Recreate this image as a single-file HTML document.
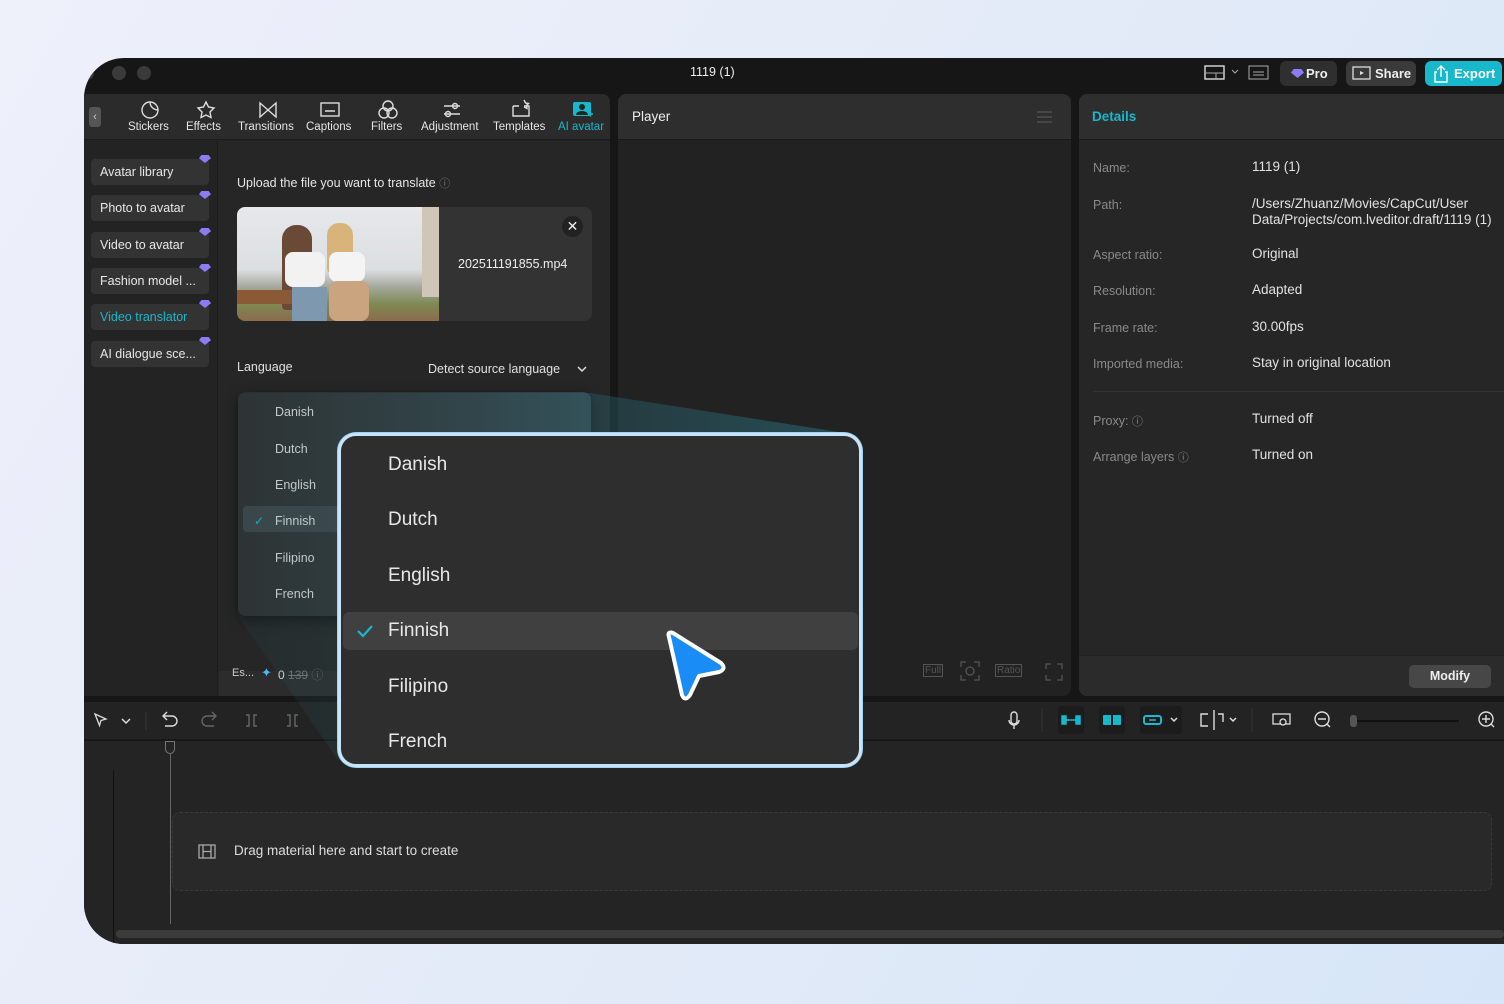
<!DOCTYPE html>
<html><head><meta charset="utf-8">
<style>
*{box-sizing:border-box;margin:0;padding:0}
body{width:1504px;height:1004px;overflow:hidden;background:linear-gradient(120deg,#eef0fa 0%,#e4ebf8 50%,#d6e6f8 100%);font-family:"Liberation Sans",sans-serif;position:relative;color:#ddd}
.abs{position:absolute}
.win{left:84px;top:58px;width:1420px;height:886px;background:#161616;border-radius:40px 0 0 40px;overflow:hidden}
.t{position:absolute;white-space:nowrap}
.panel{position:absolute;background:#262626;border-radius:8px;overflow:hidden}
.tab{position:absolute;top:0;text-align:center;font-size:11.5px;color:#e6e6e6}
.side{position:absolute;left:7px;width:118px;height:26px;background:#333;border-radius:4px;font-size:12.5px;color:#e8e8e8;padding:6px 0 0 9px}
.gem{position:absolute;right:-2px;top:-4px;width:12px;height:8px;background:#8b7cf6;clip-path:polygon(20% 0,80% 0,100% 40%,50% 100%,0 40%)}
.lbl{position:absolute;left:14px;font-size:12.5px;color:#8a8a8a}
.val{position:absolute;left:173px;font-size:13.5px;color:#e2e2e2}
.ic{stroke:#ddd;fill:none;stroke-width:1.4}
</style></head><body>
<div class="abs win">
  <div class="abs" style="left:-4px;top:8px;width:14px;height:14px;border-radius:7px;background:#3a3a3a"></div>
  <div class="abs" style="left:28px;top:8px;width:14px;height:14px;border-radius:7px;background:#3a3a3a"></div>
  <div class="abs" style="left:53px;top:8px;width:14px;height:14px;border-radius:7px;background:#3a3a3a"></div>
  <div class="t" style="left:606px;top:7px;font-size:12.5px;color:#eee">1119 (1)</div>
  <svg class="abs" style="left:1120px;top:6px" width="70" height="18"><rect x="1" y="2" width="19" height="13" class="ic" stroke="#aaa"/><line x1="1" y1="9" x2="20" y2="9" stroke="#aaa"/><line x1="12" y1="9" x2="12" y2="15" stroke="#aaa"/><path d="M28 6l3 3 3-3" stroke="#aaa" fill="none"/><rect x="45" y="2" width="19" height="13" fill="none" stroke="#aaa"/><line x1="49" y1="8" x2="60" y2="8" stroke="#aaa"/><line x1="49" y1="11" x2="60" y2="11" stroke="#aaa"/></svg>
  <div class="abs" style="left:1196px;top:3px;width:57px;height:25px;background:#2f2f2f;border-radius:6px"><div class="abs" style="left:11px;top:8px;width:13px;height:9px;background:#8b7cf6;clip-path:polygon(20% 0,80% 0,100% 40%,50% 100%,0 40%)"></div><div class="t" style="left:26px;top:5px;font-size:13px;font-weight:bold;color:#eee">Pro</div></div>
  <div class="abs" style="left:1262px;top:3px;width:70px;height:25px;background:#3a3a3a;border-radius:6px"><svg class="abs" style="left:6px;top:5px" width="20" height="16"><rect x="1" y="1" width="17" height="12" fill="none" stroke="#ddd" stroke-width="1.3"/><path d="M8 5l4 2-4 2z" fill="#ddd"/></svg><div class="t" style="left:29px;top:5px;font-size:13px;font-weight:bold;color:#eee">Share</div></div>
  <div class="abs" style="left:1341px;top:3px;width:77px;height:25px;background:#17b8cc;border-radius:6px"><svg class="abs" style="left:7px;top:4px" width="18" height="18"><path d="M5 7H3v10h12V7h-2M9 12V2M5 5l4-4 4 4" fill="none" stroke="#fff" stroke-width="1.4"/></svg><div class="t" style="left:29px;top:5px;font-size:13px;font-weight:bold;color:#fff">Export</div></div>

  <div class="panel" style="left:0;top:36px;width:526px;height:602px;background:#232323;border-radius:0 8px 8px 0">
    <div class="abs" style="left:0;top:0;width:526px;height:46px;background:#2b2b2b;border-bottom:1px solid #1c1c1c"></div>
    <div class="abs" style="left:5px;top:13px;width:12px;height:20px;background:#555;border-radius:3px;color:#ccc;font-size:11px;text-align:center;line-height:20px">‹</div>
    <svg class="abs" style="left:0;top:0" width="526" height="30">
      <circle cx="66" cy="16" r="8" class="ic"/><path d="M66 8a8 8 0 0 0 8 8" class="ic"/>
      <path d="M122 8l2.5 5 5.5 1-4 4 1 5.5-5-2.5-5 2.5 1-5.5-4-4 5.5-1z" class="ic"/>
      <path d="M176 9v14l8-7 8 7V9l-8 7z" class="ic"/>
      <rect x="237" y="9" width="18" height="13" class="ic"/><line x1="241" y1="17" x2="251" y2="17" class="ic"/>
      <circle cx="304" cy="12" r="5" class="ic"/><circle cx="300" cy="19" r="5" class="ic"/><circle cx="308" cy="19" r="5" class="ic"/>
      <path d="M360 12h16M360 20h16" class="ic"/><circle cx="371" cy="12" r="2.5" fill="#2b2b2b" class="ic"/><circle cx="364" cy="20" r="2.5" fill="#2b2b2b" class="ic"/>
      <path d="M429 12v10h16V12h-5M429 12h6" class="ic"/><path d="M440 6l1.5 3 3 .5-2 2 .5 3-3-1.5" class="ic"/>
      <rect x="489" y="8" width="18" height="14" rx="2" fill="#17b8cc"/><circle cx="498" cy="13" r="3" fill="#232323"/><path d="M492 21a6 4 0 0 1 12 0" fill="#232323"/><path d="M504 20h5M506.5 17.5v5" stroke="#17b8cc" stroke-width="1.6"/>
    </svg>
    <div class="tab" style="left:44px;top:27px">Stickers</div>
    <div class="tab" style="left:102px;top:27px">Effects</div>
    <div class="tab" style="left:154px;top:27px">Transitions</div>
    <div class="tab" style="left:222px;top:27px">Captions</div>
    <div class="tab" style="left:287px;top:27px">Filters</div>
    <div class="tab" style="left:337px;top:27px">Adjustment</div>
    <div class="tab" style="left:409px;top:27px">Templates</div>
    <div class="tab" style="left:474px;top:27px;color:#17b8cc">AI avatar</div>
    <div class="abs" style="left:133px;top:47px;width:1px;height:555px;background:#1c1c1c"></div>
    <div class="abs" style="left:134px;top:47px;width:392px;height:555px;background:#262626"></div>

    <div class="side" style="top:65px">Avatar library<div class="gem"></div></div>
    <div class="side" style="top:101px">Photo to avatar<div class="gem"></div></div>
    <div class="side" style="top:138px">Video to avatar<div class="gem"></div></div>
    <div class="side" style="top:174px">Fashion model ...<div class="gem"></div></div>
    <div class="side" style="top:210px;color:#17b8cc">Video translator<div class="gem"></div></div>
    <div class="side" style="top:247px">AI dialogue sce...<div class="gem"></div></div>

    <div class="t" style="left:153px;top:81px;font-size:12.5px;color:#e6e6e6">Upload the file you want to translate <span style="color:#777;font-size:11px">ⓘ</span></div>
    <div class="abs" style="left:153px;top:113px;width:355px;height:114px;background:#333;border-radius:8px"></div>
    <div class="abs" style="left:153px;top:113px;width:202px;height:114px;border-radius:8px 0 0 8px;overflow:hidden;background:linear-gradient(180deg,#e6e8ea 0%,#dcdfe2 55%,#a4a89c 70%,#7e8a54 85%,#8b6b4a 100%)">
      <div class="abs" style="left:185px;top:0;width:17px;height:90px;background:#cfc6b8"></div>
      <div class="abs" style="left:45px;top:18px;width:30px;height:85px;background:#6a4a36;border-radius:14px 14px 4px 4px"></div>
      <div class="abs" style="left:48px;top:45px;width:40px;height:35px;background:#f2f2f2;border-radius:8px"></div>
      <div class="abs" style="left:90px;top:16px;width:26px;height:50px;background:#d8b47a;border-radius:12px 12px 4px 4px"></div>
      <div class="abs" style="left:92px;top:45px;width:36px;height:30px;background:#f4f4f4;border-radius:8px"></div>
      <div class="abs" style="left:92px;top:74px;width:40px;height:40px;background:#c9a47e;border-radius:8px"></div>
      <div class="abs" style="left:0;top:83px;width:90px;height:14px;background:#8a5a36"></div>
      <div class="abs" style="left:55px;top:80px;width:35px;height:34px;background:#7e98b0"></div>
    </div>
    <div class="t" style="left:374px;top:163px;font-size:12.5px;color:#eee">202511191855.mp4</div>
    <div class="abs" style="left:478px;top:122px;width:21px;height:21px;border-radius:11px;background:#222;color:#eee;font-size:14px;text-align:center;line-height:21px">✕</div>

    <div class="t" style="left:153px;top:266px;font-size:12.5px;color:#e0e0e0">Language</div>
    <div class="t" style="left:344px;top:268px;font-size:12.5px;color:#e0e0e0">Detect source language</div>
    <svg class="abs" style="left:492px;top:270px" width="12" height="10"><path d="M2 3l4 4 4-4" fill="none" stroke="#ddd" stroke-width="1.5"/></svg>
    <div class="abs" style="left:135px;top:577px;width:391px;height:25px;background:#2c2c2c"></div>
  </div>
  <div class="t" style="left:148px;top:609px;font-size:11px;color:#ccc">Es...</div>
  <div class="t" style="left:177px;top:607px;font-size:13px;color:#4cb8f0">✦</div>
  <div class="t" style="left:194px;top:608px;font-size:12px;color:#ddd">0 <span style="color:#777;text-decoration:line-through">139</span> <span style="color:#666">ⓘ</span></div>

  <div class="abs" style="left:154px;top:334px;width:353px;height:224px;background:linear-gradient(90deg,#2e2e2e 0%,#33393c 60%,#37454a 100%);border-radius:8px;box-shadow:0 4px 12px rgba(0,0,0,.5)">
    <div class="abs" style="left:5px;top:114px;width:120px;height:26px;background:#3d4447;border-radius:4px"></div>
    <div class="t" style="left:37px;top:13px;font-size:12.5px;color:#ddd">Danish</div>
    <div class="t" style="left:37px;top:50px;font-size:12.5px;color:#ddd">Dutch</div>
    <div class="t" style="left:37px;top:86px;font-size:12.5px;color:#ddd">English</div>
    <div class="t" style="left:16px;top:122px;font-size:12px;color:#17b8cc">✓</div>
    <div class="t" style="left:37px;top:122px;font-size:12.5px;color:#ddd">Finnish</div>
    <div class="t" style="left:37px;top:159px;font-size:12.5px;color:#ddd">Filipino</div>
    <div class="t" style="left:37px;top:195px;font-size:12.5px;color:#ddd">French</div>
  </div>

  <div class="panel" style="left:534px;top:36px;width:453px;height:602px;background:#222">
    <div class="abs" style="left:0;top:0;width:453px;height:46px;background:#2e2e2e;border-bottom:1px solid #1a1a1a"></div>
    <div class="t" style="left:14px;top:15px;font-size:13.5px;color:#eee">Player</div>
    <svg class="abs" style="left:419px;top:16px" width="16" height="14"><path d="M0 2h15M0 7h15M0 12h15" stroke="#555" stroke-width="1.3"/></svg>
    <div class="t" style="left:305px;top:570px;font-size:10px;color:#555;border:1px solid #555;padding:0 1px">Full</div>
    <svg class="abs" style="left:342px;top:567px" width="20" height="20"><path d="M1 6V1h5M14 1h5v5M19 14v5h-5M6 19H1v-5" fill="none" stroke="#555" stroke-width="1.3"/><circle cx="10" cy="10" r="4" fill="none" stroke="#555" stroke-width="1.3"/></svg>
    <div class="t" style="left:377px;top:570px;font-size:10px;color:#555;border:1px solid #555;padding:0 1px">Ratio</div>
    <svg class="abs" style="left:427px;top:569px" width="18" height="18"><path d="M1 6V1h5M12 1h5v5M17 12v5h-5M6 17H1v-5" fill="none" stroke="#555" stroke-width="1.3"/></svg>
  </div>

  <div class="panel" style="left:995px;top:36px;width:425px;height:602px;background:#262626;border-radius:8px 0 0 8px">
    <div class="abs" style="left:0;top:0;width:425px;height:46px;background:#2e2e2e;border-bottom:1px solid #1a1a1a"></div>
    <div class="t" style="left:13px;top:15px;font-size:13.5px;font-weight:bold;color:#17b8cc">Details</div>
    <div class="lbl" style="top:67px">Name:</div><div class="val" style="top:65px">1119 (1)</div>
    <div class="lbl" style="top:104px">Path:</div><div class="val" style="top:102px;line-height:16px">/Users/Zhuanz/Movies/CapCut/User<br>Data/Projects/com.lveditor.draft/1119 (1)</div>
    <div class="lbl" style="top:154px">Aspect ratio:</div><div class="val" style="top:152px">Original</div>
    <div class="lbl" style="top:190px">Resolution:</div><div class="val" style="top:188px">Adapted</div>
    <div class="lbl" style="top:227px">Frame rate:</div><div class="val" style="top:225px">30.00fps</div>
    <div class="lbl" style="top:263px">Imported media:</div><div class="val" style="top:261px">Stay in original location</div>
    <div class="abs" style="left:14px;top:297px;width:411px;height:1px;background:#333"></div>
    <div class="lbl" style="top:319px">Proxy: <span style="font-size:11px">ⓘ</span></div><div class="val" style="top:317px">Turned off</div>
    <div class="lbl" style="top:355px">Arrange layers <span style="font-size:11px">ⓘ</span></div><div class="val" style="top:353px">Turned on</div>
    <div class="abs" style="left:0;top:561px;width:425px;height:41px;background:#2b2b2b;border-top:1px solid #222"></div>
    <div class="abs" style="left:330px;top:571px;width:82px;height:23px;background:#474747;border-radius:5px;font-size:12.5px;font-weight:bold;color:#eee;text-align:center;line-height:23px">Modify</div>
  </div>

  <div class="abs" style="left:0;top:644px;width:1420px;height:38px;background:#232323;border-bottom:1px solid #1a1a1a"></div>
  <svg class="abs" style="left:0;top:644px" width="1420" height="38">
    <path d="M11 12l11 5-5 1.5-1.5 5z" fill="none" stroke="#ddd" stroke-width="1.3"/><path d="M38 17l4 4 4-4" fill="none" stroke="#ddd" stroke-width="1.5"/>
    <line x1="62" y1="10" x2="62" y2="28" stroke="#3a3a3a"/>
    <path d="M80 14h8a5 5 0 0 1 0 10h-7M83 10l-4 4 4 4" fill="none" stroke="#ddd" stroke-width="1.4"/>
    <path d="M131 14h-8a5 5 0 0 0 0 10h7M128 10l4 4-4 4" fill="none" stroke="#666" stroke-width="1.4"/>
    <path d="M162 13h3v11h-3M173 13h-3v11h3" fill="none" stroke="#666" stroke-width="1.4"/>
    <path d="M203 13h3v11h-3M214 13h-3v11h3" fill="none" stroke="#666" stroke-width="1.4"/>
    <rect x="927" y="10" width="6" height="12" rx="3" fill="none" stroke="#ddd" stroke-width="1.4"/><path d="M925 18a5 5 0 0 0 10 0M930 23v4" fill="none" stroke="#ddd" stroke-width="1.4"/>
    <line x1="958" y1="6" x2="958" y2="30" stroke="#333"/>
    <rect x="974" y="4" width="26" height="28" rx="3" fill="#1c1c1c"/><path d="M978 14h4v8h-4zM992 14h4v8h-4zM982 18h10" fill="#17b8cc" stroke="#17b8cc" stroke-width="1.5"/>
    <rect x="1015" y="4" width="26" height="28" rx="3" fill="#1c1c1c"/><rect x="1019" y="13" width="18" height="10" rx="1" fill="#17b8cc"/><line x1="1028" y1="9" x2="1028" y2="27" stroke="#1c1c1c" stroke-width="2"/>
    <rect x="1056" y="4" width="42" height="28" rx="3" fill="#1c1c1c"/><rect x="1060" y="14" width="17" height="8" rx="2" fill="none" stroke="#17b8cc" stroke-width="2"/><line x1="1065" y1="18" x2="1072" y2="18" stroke="#17b8cc" stroke-width="1.5"/><path d="M1087 16l3 3 3-3" fill="none" stroke="#ddd" stroke-width="1.5"/>
    <path d="M1124 12h-7v12h7M1130 8v20M1134 12h5v8" fill="none" stroke="#ddd" stroke-width="1.4"/><path d="M1146 16l3 3 3-3" fill="none" stroke="#ddd" stroke-width="1.5"/>
    <line x1="1168" y1="6" x2="1168" y2="30" stroke="#333"/>
    <rect x="1189" y="12" width="17" height="10" fill="none" stroke="#ddd" stroke-width="1.3"/><circle cx="1199" cy="20" r="3" fill="#232323" stroke="#ddd" stroke-width="1.3"/>
    <circle cx="1238" cy="17" r="7" fill="none" stroke="#ddd" stroke-width="1.4"/><path d="M1234 17h8M1243 22l3 3" stroke="#ddd" stroke-width="1.4"/>
    <rect x="1266" y="13" width="7" height="12" rx="3" fill="#555"/><line x1="1273" y1="19" x2="1375" y2="19" stroke="#111" stroke-width="2"/>
    <circle cx="1402" cy="17" r="7" fill="none" stroke="#ddd" stroke-width="1.4"/><path d="M1398 17h8M1402 13v8M1407 22l3 3" stroke="#ddd" stroke-width="1.4"/>
  </svg>

  <div class="abs" style="left:0;top:683px;width:1420px;height:203px;background:#242424"></div>
  <div class="abs" style="left:29px;top:712px;width:1px;height:174px;background:#111"></div>
  <div class="abs" style="left:81px;top:683px;width:10px;height:13px;border:1.5px solid #777;border-radius:0 0 5px 5px"></div>
  <div class="abs" style="left:86px;top:696px;width:1px;height:170px;background:#666"></div>
  <div class="abs" style="left:88px;top:754px;width:1320px;height:79px;border:1px dashed #3a3a3a;border-radius:8px;background:#292929"></div>
  <svg class="abs" style="left:114px;top:786px" width="18" height="15"><rect x="1" y="1" width="16" height="13" fill="none" stroke="#aaa" stroke-width="1.3"/><path d="M5 1v13M13 1v13M5 7.5h8" stroke="#aaa" stroke-width="1.3"/></svg>
  <div class="t" style="left:150px;top:785px;font-size:13.5px;color:#ddd">Drag material here and start to create</div>
  <div class="abs" style="left:32px;top:872px;width:1388px;height:8px;background:#3c3c3c;border-radius:4px"></div>
</div>

<svg class="abs" style="left:0;top:0" width="1504" height="1004">
  <defs><linearGradient id="g" x1="0" y1="0" x2="1" y2="0"><stop offset="0" stop-color="#2a5a62" stop-opacity=".12"/><stop offset=".6" stop-color="#2a6a76" stop-opacity=".35"/><stop offset="1" stop-color="#2a7080" stop-opacity=".55"/></linearGradient></defs>
  <polygon points="590,393 845,433 845,760 338,760 238,616 238,393" fill="url(#g)"/>
</svg>

<div class="abs" style="left:338px;top:433px;width:524px;height:334px;border-radius:18px;border:3px solid #c8e4f8;background:#2e2e2e;box-shadow:0 0 0 1px #9fd4f4">
  <div class="abs" style="left:2px;top:176px;width:515px;height:38px;background:#404040;border-radius:6px"></div>
  <div class="t" style="left:47px;top:18px;font-size:19px;color:#e8e8e8">Danish</div>
  <div class="t" style="left:47px;top:73px;font-size:19px;color:#e8e8e8">Dutch</div>
  <div class="t" style="left:47px;top:129px;font-size:19px;color:#e8e8e8">English</div>
  <svg class="abs" style="left:15px;top:187px" width="18" height="16"><path d="M2 8l5 5 9-10" fill="none" stroke="#17b8cc" stroke-width="2.2"/></svg>
  <div class="t" style="left:47px;top:184px;font-size:19px;color:#e8e8e8">Finnish</div>
  <div class="t" style="left:47px;top:240px;font-size:19px;color:#e8e8e8">Filipino</div>
  <div class="t" style="left:47px;top:295px;font-size:19px;color:#e8e8e8">French</div>
</div>
<svg class="abs" style="left:655px;top:625px" width="80" height="85"><path d="M14 12 Q12 6 18 8 L66 38 Q72 44 64 47 L44 51 L35 70 Q30 77 27 70 Z" fill="#1a8cf5" stroke="#fff" stroke-width="4" stroke-linejoin="round"/></svg>
</body></html>
